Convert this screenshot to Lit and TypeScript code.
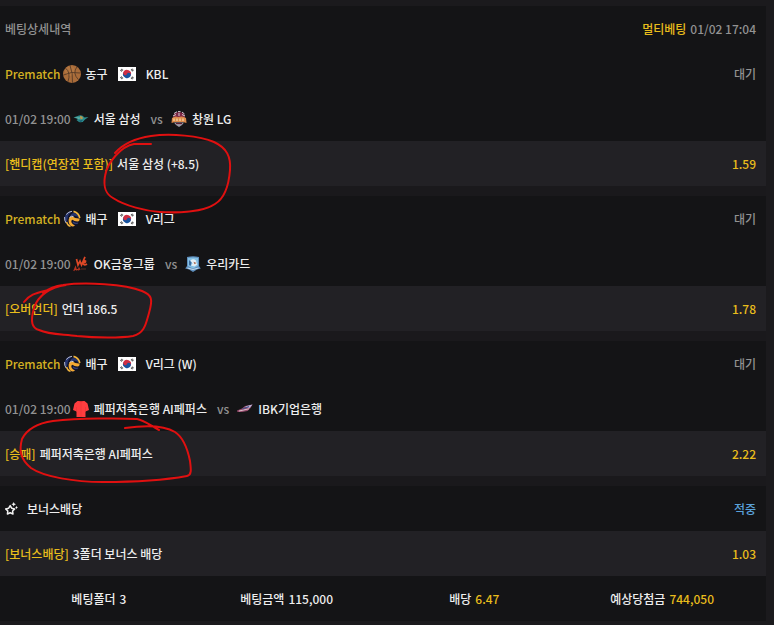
import { LitElement, html, svg, css, TemplateResult } from "lit";
import { customElement } from "lit/decorators.js";

interface Match {
  sport: string;
  ball: TemplateResult;
  league: string;
  time: string;
  home: string;
  homeIcon: TemplateResult;
  away: string;
  awayIcon: TemplateResult;
  market: string;
  pick: string;
  odds: string;
  mark: string;
}

const basketball = html`<svg class="ball" viewBox="0 0 18 18" aria-hidden="true">
  <circle cx="9" cy="9" r="9" fill="#a96c3a" />
  <circle cx="7" cy="6" r="5" fill="#b97b45" opacity=".6" />
  <g fill="none" stroke="#4d3524" stroke-width=".8">
    <path d="M7 .4Q10 8 9.500 17.800M.4 10Q8 6 17.500 8M2.500 3.200Q8 7 5 16.800M14 1.800Q9 8 15.500 14.800" />
  </g>
</svg>`;

const volleyball = html`<svg class="ball" viewBox="0 0 18 18" aria-hidden="true">
  <circle cx="9" cy="9" r="8" fill="#11142a" />
  <path d="M2 6Q4 1.500 9 1.200Q5 4 4.500 9L3.500 12.500Q.8 9.500 2 6Z" fill="#26356f" />
  <path d="M7.500 5Q10 1.500 14 4L16 7.500Q12 4.500 7.500 6.500Z" fill="#26356f" />
  <path d="M3.200 4.500Q5.500 1.600 9 1.300M1.600 7Q1.200 10.500 3.200 13.200" stroke="#c9cddd" stroke-width=".9" fill="none" />
  <path d="M10.500 1.400Q15.500 2.500 16.800 8" stroke="#f3b63c" stroke-width="1.700" fill="none" />
  <path d="M5.800 9Q6.500 6.500 9.500 6.600Q12.500 8.800 16.800 8.500Q16.800 11.300 14.500 11.500Q11 11.500 9.500 9.700Q7.500 10.500 8.500 12.500Q9.500 14.500 12 15.500Q10 17 8 16Q5 13.500 5.800 9Z" fill="#f3a932" />
  <path d="M6.500 7.500Q8 5.600 10.500 6.500" stroke="#e8e9ee" stroke-width=".9" fill="none" />
  <path d="M3.600 12Q4.500 15.500 7.500 16.500" stroke="#f3b63c" stroke-width="1.300" fill="none" />
  <path d="M10 12Q12.500 14.200 15 13" stroke="#35427c" stroke-width="1.300" fill="none" />
</svg>`;

const flag = html`<svg class="flag" viewBox="0 0 18 14" role="img" aria-label="대한민국">
  <rect width="18" height="14" fill="#fff" />
  <g transform="rotate(25 9 7)">
    <path d="M5 7a4 4 0 0 1 8 0Z" fill="#cf2f43" />
    <path d="M5 7a4 4 0 0 0 8 0Z" fill="#17549f" />
    <circle cx="7" cy="7" r="2" fill="#cf2f43" />
    <circle cx="11" cy="7" r="2" fill="#17549f" />
  </g>
  <g stroke="#333" stroke-width="2.200" stroke-dasharray=".8 .3">
    <path d="M2.800 4L4.600 2.200M13.400 2.200L15.200 4M2.800 10L4.600 11.800M13.400 11.800L15.200 10" />
  </g>
</svg>`;

const thunders = html`<svg class="team" viewBox="0 0 16 16" aria-hidden="true">
  <path d="M.5 6.500L6 4.500Q9 3.500 11.500 6.500L15.500 6L12 8.500Q10 12 6 11L3.500 9L5 8Z" fill="#2e8f8f" />
  <path d="M1.500 6.300L8 6.500L6 8Z" fill="#6db7a8" />
  <path d="M7 5Q10 4.500 10 7.500L7.500 8.500Z" fill="#c09a4c" />
  <path d="M5 9.700L10 9L8 11Z" fill="#155a70" />
</svg>`;

const sakers = html`<svg class="team" viewBox="0 0 16 16" aria-hidden="true">
  <path d="M3 3Q8-1 13 3L14 7H2Z" fill="#7d2745" />
  <path d="M3 2.500L6 .8M7 .6H9.500M11 1L13.500 3M2 5L5 3.500M8 2V5M11 3.500L14 5" stroke="#d6cdd2" stroke-width="1" />
  <path d="M1 7Q4 4.500 7 6Q12 4.500 15 7L15.500 12L12 11H4L.5 12Z" fill="#dc8a4b" />
  <path d="M3 7.500V10M6 7.500V10M9 7.500V10M12 7.500V10" stroke="#f3d7a0" stroke-width="1.300" />
  <path d="M3 11.500H13L11 14L8 16L5 14Z" fill="#9e9ba7" />
  <path d="M5 12.500H11" stroke="#5f2034" stroke-width="1.200" />
</svg>`;

const okMan = html`<svg class="team" viewBox="0 0 16 16" aria-hidden="true">
  <path d="M3.500 3L5 9L7 5L8.500 9L12 .8M10 7Q13 6.500 12.500 5Q10.500 4.500 10 7.500Q11 10 14 8" fill="none" stroke="#de4826" stroke-width="1.700" />
  <path d="M.8 15L2.500 11L3.500 14.500M1 13.500H5M5 14.500L6 12L7 14" fill="none" stroke="#b6331f" stroke-width="1.100" />
  <path d="M8 13H13" stroke="#4b2720" stroke-width="1.400" />
</svg>`;

const wooriCard = html`<svg class="team" viewBox="0 0 16 16" aria-hidden="true">
  <path d="M2 1Q8-.5 14 1V10L15.800 12.500L12 13.500L8 16L4 13.500L.2 12.500L2 10Z" fill="#5f8fbd" />
  <path d="M3 2Q8 .8 13 2V10L8 12.500L3 10Z" fill="#84c0e4" />
  <path d="M5.500 4.500Q8 2 11 4.500L11.500 6.500L12.300 8.500L9.500 10.500L6 9.500L7.500 7.500Z" fill="#e6eff5" />
  <path d="M8.500 5.800L11.500 7L9.500 8.200Z" fill="#a86850" />
  <path d="M4 4L6.500 6.500L5.500 10L4 9Z" fill="#3a699c" />
  <path d="M2.500 12Q8 15 13.500 12" stroke="#c6dbea" stroke-width="1" fill="none" />
</svg>`;

const jersey = html`<svg class="team" viewBox="0 0 16 16" aria-hidden="true">
  <path d="M4.500 0H11.500L14.500 2.500L16 9L12.500 10.500V16H3.500V10.500L0 9L1.500 2.500Z" fill="#ff3d3f" />
  <path d="M5.500 0H10.500L8 1.500Z" fill="#d82d30" />
  <path d="M8 2V16M3.500 6V10.500M12.500 6V10.500" stroke="#e83538" stroke-width=".6" />
</svg>`;

const altos = html`<svg class="team" viewBox="0 0 16 16" aria-hidden="true">
  <path d="M0 9.500L5 7.500L8 5L15.500 3.500L13.500 7L10.500 10L5 11L.5 11Z" fill="#944b6b" />
  <path d="M8 5.500L15.500 3.500L12.500 7Z" fill="#b9b8db" />
  <path d="M2 10L12 7.800" stroke="#e5cbd5" stroke-width=".9" />
  <path d="M5.500 8L12 5.500" stroke="#45518b" stroke-width="1.100" />
</svg>`;

const stars = html`<svg class="stars" viewBox="0 0 13 13" aria-hidden="true">
  <path d="M5.200 3.600L6.700 6.200L9.700 6.900L7.600 9L8 12L5.200 10.700L2.400 12L2.800 9L.7 6.900L3.700 6.200Z" fill="none" stroke="#f2f2f2" stroke-width="1.500" stroke-linejoin="round" />
  <path d="M8.700 0L9.400 1.600L11 2.300L9.400 3L8.700 4.600L8 3L6.400 2.300L8 1.600ZM11.500 3.800L12 5L13 5.500L12 6L11.500 7.200L11 6L10 5.500L11 5Z" fill="#f2f2f2" />
</svg>`;

const matches: Match[] = [
  {
    sport: "농구", ball: basketball, league: "KBL", time: "01/02 19:00",
    home: "서울 삼성", homeIcon: thunders, away: "창원 LG", awayIcon: sakers,
    market: "[핸디캡(연장전 포함)]", pick: "서울 삼성 (+8.5)", odds: "1.59",
    mark: "M151 93L134 93C122 95 107 111 105 125C103 137 106 143 113 147C125 155 146 160 160 161C178 162 203 161 215 153C225 147 229 132 230 119C231 106 227 97 214 91C200 85 171 82 151 85C137 87 123 93 115 102",
  },
  {
    sport: "배구", ball: volleyball, league: "V리그", time: "01/02 19:00",
    home: "OK금융그룹", homeIcon: okMan, away: "우리카드", awayIcon: wooriCard,
    market: "[오버언더]", pick: "언더 186.5", odds: "1.78",
    mark: "M24 106C30 98 37 97 48 94M66 89C51 91 38 99 34 112C30 126 32 132 39 134C50 139 64 138 77 140C96 142 121 142 133 140C145 137 146 127 149 117C153 103 152 99 142 95C125 88 85 86 63 89C54 90 48 93 43 97",
  },
  {
    sport: "배구", ball: volleyball, league: "V리그 (W)", time: "01/02 19:00",
    home: "페퍼저축은행 AI페퍼스", homeIcon: jersey, away: "IBK기업은행", awayIcon: altos,
    market: "[승패]", pick: "페퍼저축은행 AI페퍼스", odds: "2.22",
    mark: "M125 87C146 84 165 85 175 91C184 97 188 110 190 120C191 128 192 134 187 135C165 139 129 141 103 141C75 141 44 136 31 127C20 118 19 109 22 98C27 88 39 82 53 80C80 77 119 77 137 78C144 79 151 85 159 89",
  },
];

const totals = [
  { label: "베팅폴더", value: "3", gold: false },
  { label: "베팅금액", value: "115,000", gold: false },
  { label: "배당", value: "6.47", gold: true },
  { label: "예상당첨금", value: "744,050", gold: true },
];

@customElement("app-root")
export class AppRoot extends LitElement {
  static styles = css`
    :host {
      display: block;
      min-height: 100vh;
      box-sizing: border-box;
      padding: 6px 8px 5px 0;
      background: #1b1a1d;
      color: #eee;
      font: 500 12px/18px "Noto Sans CJK KR", "Noto Sans", sans-serif;
      white-space: nowrap;
    }
    .slip { background: #141416; }
    .row {
      display: flex;
      align-items: center;
      height: 45px;
      padding: 0 10px 0 5px;
      box-sizing: border-box;
    }
    h1 { margin: 0; font: inherit; }
    .muted { color: #929292; }
    .gold { color: #e9bd1c; }
    .yellow { color: #d3b022; }
    .hit { color: #5ba2da; }
    .end { margin-left: auto; }
    .stamp { display: flex; gap: 4px; }
    .match { position: relative; border-bottom: 10px solid #1a191c; }
    .pick { background: #222125; gap: 4px; }
    svg { display: block; flex: none; }
    .ball { width: 18px; height: 18px; margin: 0 5px 0 2px; }
    .flag { width: 18px; height: 14px; margin: 0 10px; }
    .team { width: 16px; height: 16px; margin: 0 5px 0 2px; }
    .vs { margin: 0 6px 0 10px; }
    .stars { width: 13px; height: 13px; margin-right: 9px; }
    .mark {
      position: absolute;
      left: 0;
      top: 0;
      width: 240px;
      height: 145px;
      overflow: visible;
      pointer-events: none;
      fill: none;
      stroke: #e01010;
      stroke-width: 2;
      stroke-linecap: round;
    }
    .totals {
      display: grid;
      grid-template-columns: repeat(4, 1fr);
      margin: 0;
      text-align: center;
    }
    .total { display: flex; justify-content: center; gap: 4px; }
    dd { margin: 0; }
  `;

  private renderMatch(m: Match) {
    return html`<article class="match">
      <div class="row">
        <span class="yellow">Prematch</span>${m.ball}
        <span>${m.sport}</span>${flag}
        <span>${m.league}</span>
        <span class="muted end">대기</span>
      </div>
      <div class="row">
        <time class="muted">${m.time}</time>${m.homeIcon}
        <span>${m.home}</span>
        <span class="muted vs">vs</span>${m.awayIcon}
        <span>${m.away}</span>
      </div>
      <div class="row pick">
        <span class="gold">${m.market}</span>
        <span>${m.pick}</span>
        <span class="gold end">${m.odds}</span>
      </div>
      <svg class="mark" viewBox="0 0 240 145" aria-hidden="true">${svg`<path d=${m.mark} />`}</svg>
    </article>`;
  }

  render() {
    return html`<main class="slip">
      <header class="row">
        <h1 class="muted">베팅상세내역</h1>
        <div class="stamp end"><span class="gold">멀티베팅</span><time class="muted">01/02 17:04</time></div>
      </header>
      ${matches.map((m) => this.renderMatch(m))}
      <section>
        <div class="row">${stars}<span>보너스배당</span><span class="hit end">적중</span></div>
        <div class="row pick">
          <span class="gold">[보너스배당]</span><span>3폴더 보너스 배당</span><span class="gold end">1.03</span>
        </div>
      </section>
      <dl class="row totals">
        ${totals.map((t) => html`<div class="total"><dt>${t.label}</dt><dd class=${t.gold ? "gold" : ""}>${t.value}</dd></div>`)}
      </dl>
    </main>`;
  }
}
